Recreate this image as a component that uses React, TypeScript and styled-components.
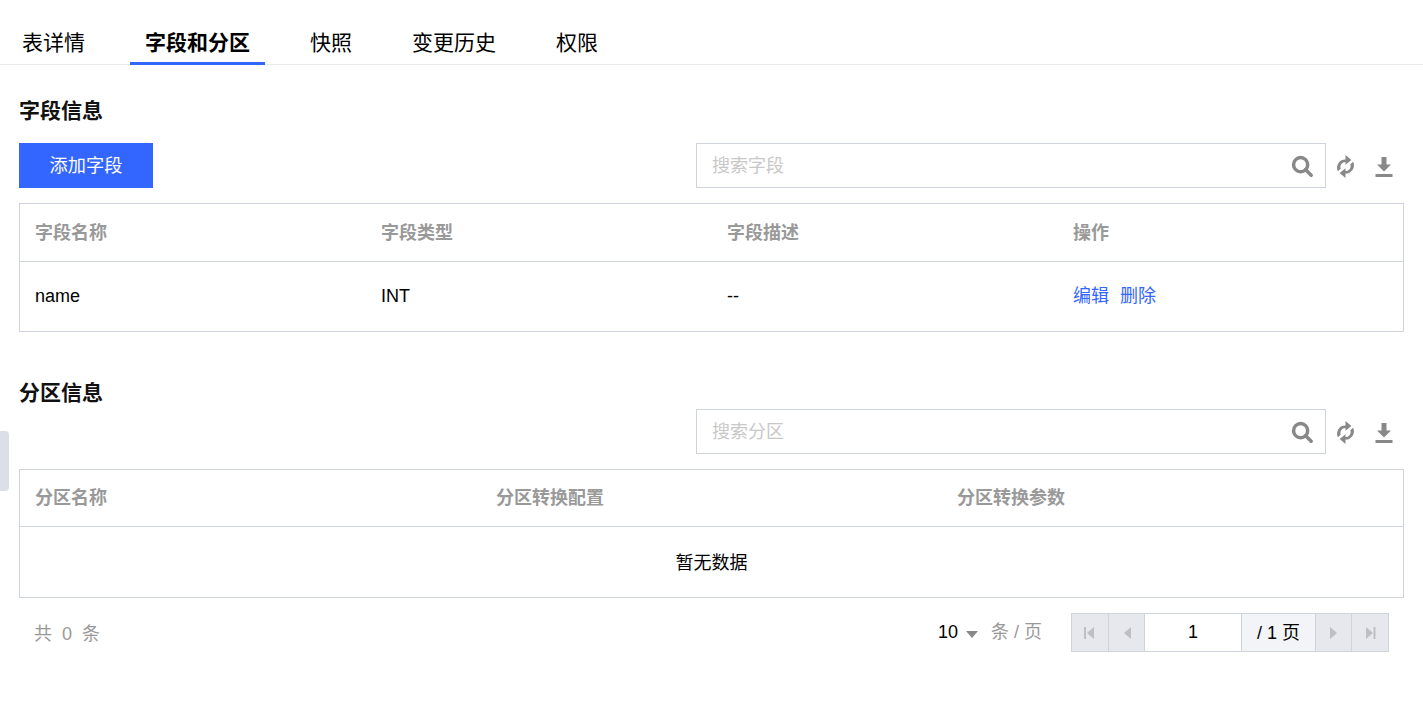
import React from 'react';
import styled, { createGlobalStyle } from 'styled-components';

const Global = createGlobalStyle`
  html, body { margin: 0; padding: 0; background: #fff; }
  body { font-family: "Liberation Sans", "Noto Sans CJK SC", sans-serif; color: #000; }
  * { box-sizing: border-box; }
`;

const Page = styled.div`
  position: relative;
  width: 1423px;
  height: 702px;
  overflow: hidden;
`;
const Handle = styled.div`
  position: absolute;
  left: 0;
  top: 431px;
  width: 9px;
  height: 60px;
  background: #dcdfe7;
  border-radius: 0 4px 4px 0;
`;
const TabBar = styled.div`
  display: flex;
  gap: 30px;
  height: 65px;
  padding: 20px 0 0 7px;
  border-bottom: 1px solid #e7eaef;
`;
const Tab = styled.div<{ $active?: boolean }>`
  width: ${p => p.$active ? '135px' : 'auto'};
  padding: 0 15px;
  height: 45px;
  line-height: 45px;
  font-size: 21px;
  white-space: nowrap;
  font-weight: ${p => (p.$active ? 700 : 400)};
  color: #000;
  border-bottom: ${p => (p.$active ? '3px solid #3366ff' : 'none')};
`;
const Content = styled.div`
  padding: 0 19px;
`;
const Title = styled.h2<{ $top: number }>`
  margin: ${p => p.$top}px 0 0;
  font-size: 21px;
  line-height: 30px;
  height: 30px;
  font-weight: 700;
  color: #111;
`;
const Toolbar = styled.div<{ $top: number }>`
  display: flex;
  align-items: center;
  height: 45px;
  margin-top: ${p => p.$top}px;
`;
const PrimaryButton = styled.button`
  width: 134px;
  height: 45px;
  border: 0;
  padding: 0 0 4px;
  background: #3366ff;
  color: #fff;
  font: inherit;
  font-size: 18.2px;
`;
const Right = styled.div`
  margin-left: auto;
  display: flex;
  align-items: center;
`;
const Search = styled.div`
  width: 630px;
  height: 45px;
  border: 1px solid #cfd3dc;
  display: flex;
  align-items: center;
  padding-left: 15px;
  padding-right: 12px;
  justify-content: space-between;
  font-size: 18px;
`;
const Placeholder = styled.span`
  color: #c8c8c8;
  margin-bottom: 4px;
`;
const IconGroup = styled.div`
  width: 78px;
  padding: 3px 0 0 8px;
  display: flex;
  align-items: center;
  gap: 18px;
  color: #888;
`;
const RefreshSvg = styled.svg`
  margin-bottom: 2px;
`;
const Table = styled.div<{ $cols: number; $head: number; $row: number }>`
  margin-top: 15px;
  border: 1px solid #cfd3dc;
  display: grid;
  grid-template-columns: repeat(${p => p.$cols}, ${p => (p.$cols === 4 ? '346px' : '461px')});
  grid-template-rows: ${p => p.$head}px ${p => p.$row}px;
`;
const HeadCell = styled.div`
  display: flex;
  align-items: center;
  padding: 0 0 4px 15px;
  border-bottom: 1px solid #cfd3dc;
  font-size: 18px;
  font-weight: 700;
  color: #999;
`;
const Cell = styled.div`
  display: flex;
  align-items: center;
  padding-left: 15px;
  font-size: 18px;
  color: #000;
`;
const Empty = styled.div`
  grid-column: 1 / -1;
  display: flex;
  align-items: center;
  justify-content: center;
  font-size: 18px;
  padding-bottom: 2px;
`;
const LinkText = styled.span`
  color: #3366ff;
  margin: 0 11px 6px 0;
`;
const Pager = styled.div`
  margin-top: 15px;
  height: 39px;
  display: flex;
  align-items: center;
  padding: 0 15px;
  font-size: 18px;
`;
const Total = styled.div`
  color: #999;
  word-spacing: 5px;
  padding-bottom: 2px;
`;
const PageSize = styled.div`
  margin-left: auto;
  display: flex;
  align-items: center;
  color: #000;
`;
const Caret = styled.span`
  width: 0;
  height: 0;
  margin: 4px 0 0 8px;
  border-left: 6px solid transparent;
  border-right: 6px solid transparent;
  border-top: 7px solid #888;
`;
const PerPage = styled.span`
  color: #999;
  margin: 0 29px 5px 13px;
`;
const PagerBox = styled.div`
  display: flex;
  height: 39px;
  border: 1px solid #cfd3dc;
`;
const PagerBtn = styled.div<{ $w: number }>`
  width: ${p => p.$w}px;
  background: #e6e8ed;
  border-right: 1px solid #cfd3dc;
  display: flex;
  align-items: center;
  justify-content: center;
  color: #bcbfc5;
  &:last-child { border-right: 0; }
`;
const PageInput = styled.div`
  width: 97px;
  background: #fff;
  border-right: 1px solid #cfd3dc;
  display: flex;
  align-items: center;
  justify-content: center;
`;
const PageTotal = styled.div`
  width: 74px;
  padding-bottom: 4px;
  background: #f2f4f8;
  border-right: 1px solid #cfd3dc;
  display: flex;
  align-items: center;
  justify-content: center;
`;

const SearchIcon = () => (
  <svg width="22" height="22" viewBox="0 0 24 24" fill="none" stroke="#888" strokeWidth="3.8">
    <circle cx="10.5" cy="10.5" r="7.7" />
    <path d="M16 16l6 6" strokeLinecap="round" />
  </svg>
);
const RefreshIcon = () => (
  <RefreshSvg width="23" height="25" viewBox="0 0 22 24" fill="#888">
    <path d="M11 5.2V1l5.6 4.8L11 10.4V7.6a4.9 4.9 0 0 0-4.6 6.6l-2.7 2.4A7.9 7.9 0 0 1 11 5.2z" />
    <path d="M11 18.8V23l-5.6-4.8L11 13.6v2.8a4.9 4.9 0 0 0 4.6-6.6l2.7-2.4A7.9 7.9 0 0 1 11 18.8z" />
  </RefreshSvg>
);
const DownloadIcon = () => (
  <svg width="18" height="22" viewBox="0 0 18 22" fill="#888">
    <path d="M6.5 1h5v7.5H16L9 15.5 2 8.5h4.5z" />
    <rect x="0.5" y="18" width="17" height="3" />
  </svg>
);
const Tools = () => (
  <IconGroup>
    <RefreshIcon />
    <DownloadIcon />
  </IconGroup>
);
const PagerIcon = ({ d, bar }: { d: 'l' | 'r'; bar?: boolean }) => (
  <svg width="12" height="14" viewBox="0 0 12 14" fill="currentColor">
    {d === 'l' ? <path d="M10 1v12L3 7z" /> : <path d="M2 1v12l7-6z" />}
    {bar && <rect x={d === 'l' ? 0 : 9.5} y="1" width="2" height="12" />}
  </svg>
);

export default function App() {
  return (
    <Page>
      <Global />
      <Handle />
      <TabBar>
        <Tab>表详情</Tab>
        <Tab $active>字段和分区</Tab>
        <Tab>快照</Tab>
        <Tab>变更历史</Tab>
        <Tab>权限</Tab>
      </TabBar>
      <Content>
        <Title $top={31}>字段信息</Title>
        <Toolbar $top={17}>
          <PrimaryButton>添加字段</PrimaryButton>
          <Right>
            <Search><Placeholder>搜索字段</Placeholder><SearchIcon /></Search>
            <Tools />
          </Right>
        </Toolbar>
        <Table $cols={4} $head={58} $row={69}>
          <HeadCell>字段名称</HeadCell>
          <HeadCell>字段类型</HeadCell>
          <HeadCell>字段描述</HeadCell>
          <HeadCell>操作</HeadCell>
          <Cell>name</Cell>
          <Cell>INT</Cell>
          <Cell>--</Cell>
          <Cell><LinkText>编辑</LinkText><LinkText>删除</LinkText></Cell>
        </Table>
        <Title $top={46}>分区信息</Title>
        <Toolbar $top={1}>
          <Right>
            <Search><Placeholder>搜索分区</Placeholder><SearchIcon /></Search>
            <Tools />
          </Right>
        </Toolbar>
        <Table $cols={3} $head={57} $row={70}>
          <HeadCell>分区名称</HeadCell>
          <HeadCell>分区转换配置</HeadCell>
          <HeadCell>分区转换参数</HeadCell>
          <Empty>暂无数据</Empty>
        </Table>
        <Pager>
          <Total>共 0 条</Total>
          <PageSize>
            10<Caret />
            <PerPage>条 / 页</PerPage>
          </PageSize>
          <PagerBox>
            <PagerBtn $w={37}><PagerIcon d="l" bar /></PagerBtn>
            <PagerBtn $w={36}><PagerIcon d="l" /></PagerBtn>
            <PageInput>1</PageInput>
            <PageTotal>/ 1 页</PageTotal>
            <PagerBtn $w={36}><PagerIcon d="r" /></PagerBtn>
            <PagerBtn $w={36}><PagerIcon d="r" bar /></PagerBtn>
          </PagerBox>
        </Pager>
      </Content>
    </Page>
  );
}
